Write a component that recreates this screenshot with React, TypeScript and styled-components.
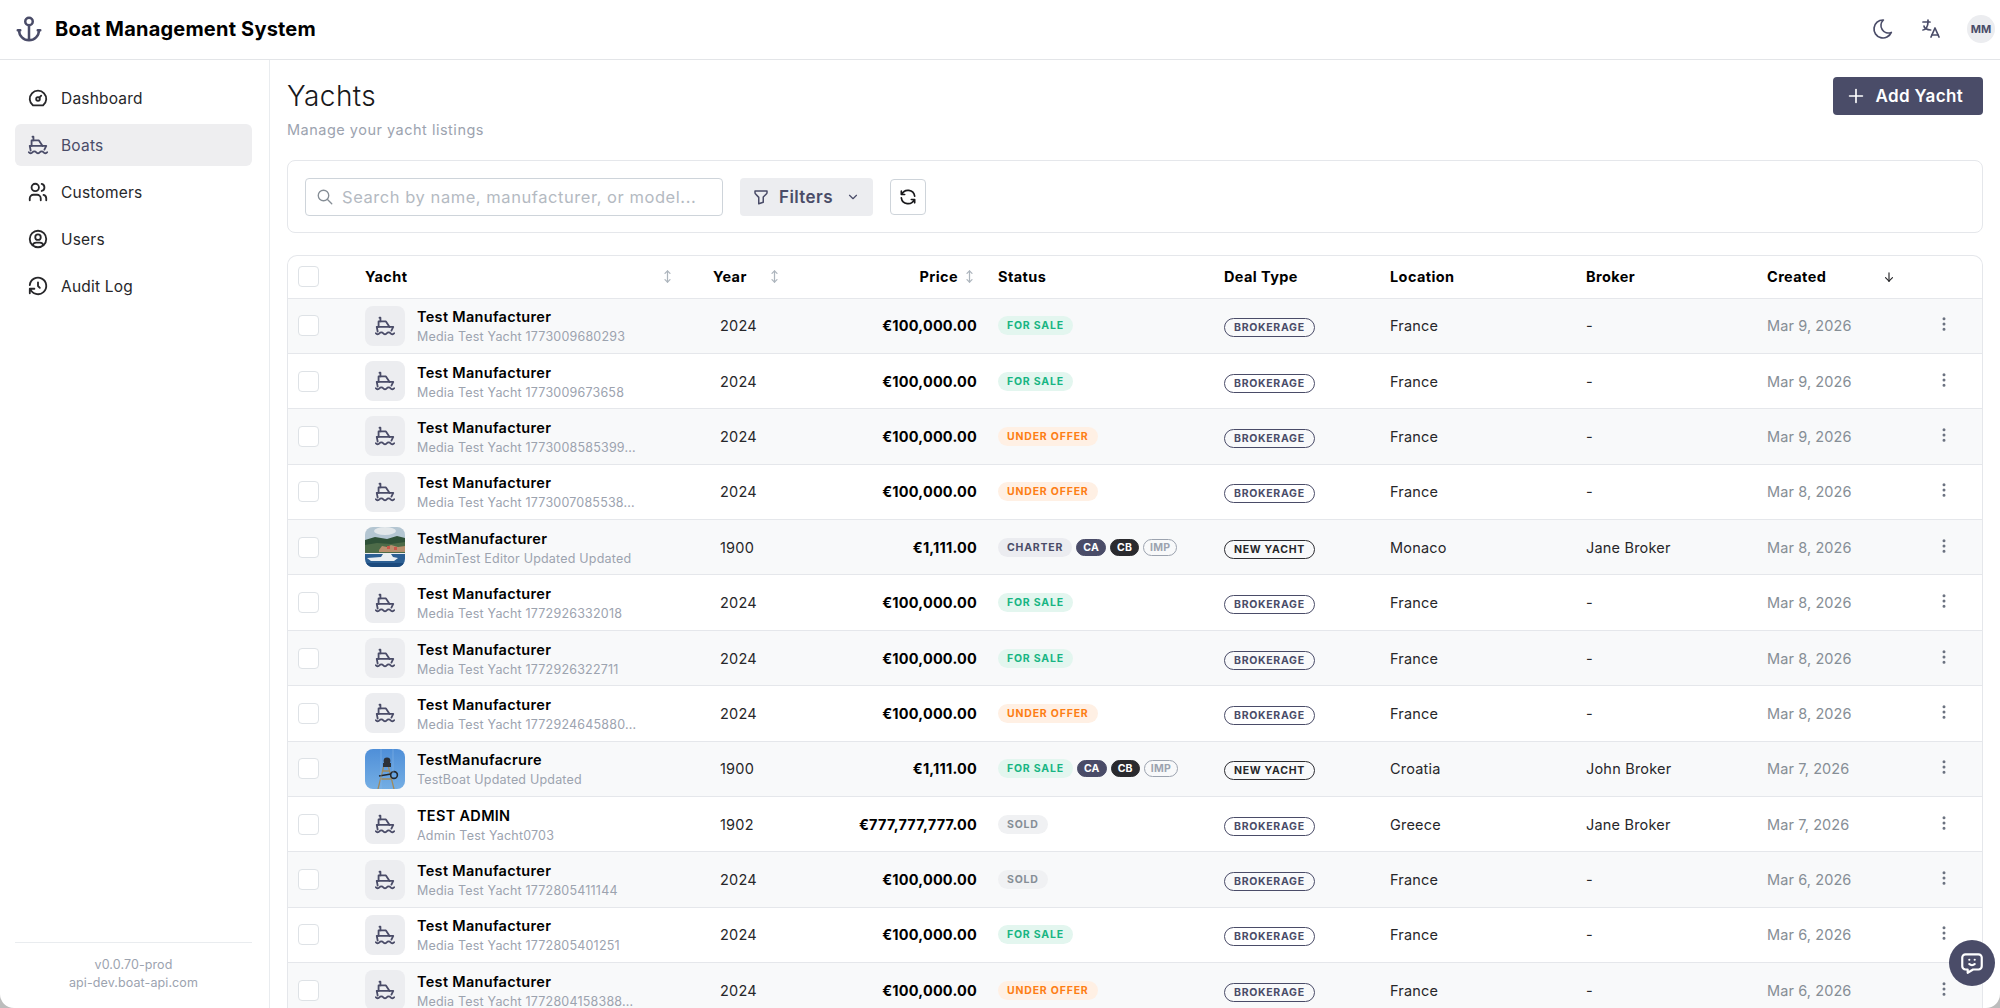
import React from 'react';
import styled, { createGlobalStyle } from 'styled-components';
import {
  TbAnchor,
  TbArrowDown,
  TbArrowsVertical,
  TbChevronDown,
  TbDashboard,
  TbDotsVertical,
  TbFilter,
  TbHistory,
  TbLanguage,
  TbMessageChatbot,
  TbMoon,
  TbPlus,
  TbRefresh,
  TbSearch,
  TbShip,
  TbUserCircle,
  TbUsers,
} from 'react-icons/tb';

const GlobalStyle = createGlobalStyle`
  html, body {
    margin: 0;
    height: 100%;
    background: #bdbdbd;
    overflow: hidden;
  }
  #root {
    height: 100%;
  }
  * {
    box-sizing: border-box;
  }
`;

const Shell = styled.div`
  position: relative;
  display: flex;
  flex-direction: column;
  height: 1008px;
  background: #fff;
  border-radius: 0 0 14px 14px;
  overflow: hidden;
  font-family: Inter, 'Noto Sans', sans-serif;
  color: #000;
`;

const Header = styled.header`
  display: flex;
  align-items: center;
  justify-content: space-between;
  height: 60px;
  flex: none;
  padding: 0 5px 2px 14px;
  border-bottom: 1px solid #e3e5e8;
`;

const Brand = styled.div`
  display: flex;
  align-items: center;
  gap: 11px;
  font-size: 20px;
  font-weight: 700;
  letter-spacing: 0.2px;
  svg {
    color: #4a4c68;
  }
`;

const HeaderTools = styled.div`
  display: flex;
  align-items: center;
  gap: 24px;
  color: #4a4c68;
`;

const Avatar = styled.div`
  display: flex;
  align-items: center;
  justify-content: center;
  width: 28px;
  height: 28px;
  border-radius: 50%;
  background: #ecedf0;
  font-size: 11px;
  font-weight: 700;
  color: #4a4c68;
`;

const Body = styled.div`
  display: flex;
  flex: 1;
  min-height: 0;
`;

const Sidebar = styled.nav`
  display: flex;
  flex-direction: column;
  width: 270px;
  flex: none;
  padding: 17px 17px 0 15px;
  border-right: 1px solid #e9ecef;
`;

const NavList = styled.div`
  display: flex;
  flex-direction: column;
  gap: 5px;
  flex: 1;
`;

const NavItem = styled.div<{ $active?: boolean }>`
  display: flex;
  align-items: center;
  gap: 12px;
  height: 42px;
  padding: 0 12px;
  border-radius: 6px;
  font-size: 15.5px;
  letter-spacing: 0.2px;
  background: ${(p) => (p.$active ? '#eeeef0' : 'transparent')};
  color: ${(p) => (p.$active ? '#4a4c68' : '#27272a')};
`;

const SidebarFooter = styled.div`
  margin-top: auto;
  height: 66px;
  padding-top: 13px;
  border-top: 1px solid #e9ecef;
  text-align: center;
  font-size: 12.5px;
  line-height: 18px;
  letter-spacing: 0.1px;
  color: #9ca3af;
`;

const Main = styled.main`
  flex: 1;
  min-width: 0;
  padding: 17px 17px 0 17px;
`;

const PageHead = styled.div`
  display: flex;
  justify-content: space-between;
  align-items: flex-start;
  height: 83px;
`;

const Title = styled.h1`
  margin: 0;
  font-size: 28px;
  line-height: 38px;
  font-weight: 300;
  letter-spacing: 0.4px;
  color: #18181b;
`;

const Subtitle = styled.div`
  margin-top: 6px;
  font-size: 14.5px;
  letter-spacing: 0.5px;
  color: #9ca3af;
`;

const PrimaryButton = styled.button`
  display: flex;
  align-items: center;
  gap: 9px;
  height: 38px;
  padding: 0 20px 0 12px;
  border: 0;
  border-radius: 4px;
  background: #4a4c68;
  color: #fff;
  font: 600 17px Inter, sans-serif;
  letter-spacing: 0.35px;
`;

const FilterCard = styled.div`
  display: flex;
  align-items: center;
  gap: 17px;
  height: 73px;
  padding: 0 17px;
  border: 1px solid #e5e7eb;
  border-radius: 8px;
`;

const SearchBox = styled.div`
  display: flex;
  align-items: center;
  gap: 8px;
  width: 418px;
  height: 38px;
  padding: 0 10px;
  border: 1px solid #ced4da;
  border-radius: 4px;
  color: #868e96;
  white-space: nowrap;
`;

const Placeholder = styled.span`
  color: #b4bac2;
  font-size: 16.5px;
  letter-spacing: 0.55px;
`;

const FilterButton = styled.button`
  display: flex;
  align-items: center;
  gap: 9px;
  width: 133px;
  height: 38px;
  padding: 0 13px 0 12px;
  border: 0;
  border-radius: 4px;
  background: #ecedf0;
  color: #4a4c68;
  font: 600 17px Inter, sans-serif;
  letter-spacing: 0.4px;
  svg:last-child {
    margin-left: auto;
  }
`;

const IconButton = styled.button`
  display: flex;
  align-items: center;
  justify-content: center;
  width: 36px;
  height: 36px;
  padding: 0;
  background: #fff;
  border: 1px solid #ced4da;
  border-radius: 4px;
  color: #18181b;
`;

const TableCard = styled.div`
  margin-top: 22px;
  border: 1px solid #e5e7eb;
  border-bottom: 0;
  border-radius: 10px 10px 0 0;
  overflow: hidden;
`;

const Table = styled.table`
  width: 100%;
  table-layout: fixed;
  border-collapse: collapse;
`;

const HeadCell = styled.th`
  height: 42px;
  padding: 0 8px;
  text-align: left;
  font-size: 14.5px;
  font-weight: 700;
  letter-spacing: 0.4px;
  border-bottom: 1px solid #e5e7eb;
`;

const CheckHead = styled(HeadCell)`
  padding-left: 10px;
`;

const HeadInner = styled.div<{ $gap?: number; $right?: boolean; $spread?: boolean }>`
  display: flex;
  align-items: center;
  justify-content: ${(p) => (p.$spread ? 'space-between' : p.$right ? 'flex-end' : 'flex-start')};
  gap: ${(p) => p.$gap ?? 0}px;
  padding-right: ${(p) => (p.$spread ? 22 : p.$right ? 5 : 0)}px;
  svg {
    flex: none;
    color: #adb5bd;
  }
`;

const SortedIcon = styled(TbArrowDown)`
  && {
    color: #27272a;
  }
`;

const Row = styled.tr`
  &:nth-child(odd) {
    background: #f8f9fa;
  }
`;

const Cell = styled.td`
  height: 55.4px;
  padding: 0 8px;
  font-size: 14.5px;
  letter-spacing: 0.2px;
  color: #27272a;
  border-bottom: 1px solid #e5e7eb;
  white-space: nowrap;
`;

const YearCell = styled(Cell)`
  padding-left: 15px;
`;

const PriceCell = styled(Cell)`
  padding-right: 13px;
  text-align: right;
  font-weight: 700;
  color: #000;
`;

const DateCell = styled(Cell)`
  letter-spacing: 0.1px;
  color: #868e96;
`;

const ActionCell = styled(Cell)`
  padding: 0 0 0 19px;
  color: #6b7280;
`;

const CheckCell = styled(Cell)`
  padding-left: 10px;
`;

const Checkbox = styled.div`
  width: 21px;
  height: 21px;
  background: #fff;
  border: 1px solid #dee2e6;
  border-radius: 4px;
`;

const YachtInfo = styled.div`
  display: flex;
  align-items: center;
  gap: 12px;
`;

const YachtText = styled.div`
  padding-top: 2px;
`;

const Thumb = styled.div`
  display: flex;
  align-items: center;
  justify-content: center;
  flex: none;
  width: 40px;
  height: 40px;
  border-radius: 8px;
  overflow: hidden;
  background: #ecedf0;
  color: #4a4c68;
`;

const YachtName = styled.div`
  font-size: 14.5px;
  line-height: 20px;
  font-weight: 600;
  letter-spacing: 0.3px;
  color: #000;
`;

const YachtModel = styled.div`
  font-size: 12.5px;
  line-height: 19px;
  color: #9ca3af;
`;

const BadgeRow = styled.div`
  display: flex;
  align-items: center;
  gap: 4px;
`;

const statusColors: Record<string, { bg: string; fg: string }> = {
  'FOR SALE': { bg: '#e3f6ef', fg: '#17b583' },
  'UNDER OFFER': { bg: '#fff0e4', fg: '#fd7e14' },
  CHARTER: { bg: '#ebecf0', fg: '#4a4c68' },
  SOLD: { bg: '#f0f1f3', fg: '#868e96' },
};

const StatusBadge = styled.span<{ $bg: string; $fg: string }>`
  display: inline-flex;
  align-items: center;
  height: 19px;
  padding: 0 9px;
  border-radius: 10px;
  font-size: 10.5px;
  font-weight: 700;
  letter-spacing: 0.8px;
  background: ${(p) => p.$bg};
  color: ${(p) => p.$fg};
`;

const MiniBadge = styled.span<{ $bg: string; $fg: string; $line?: string }>`
  display: inline-flex;
  align-items: center;
  height: 17px;
  padding: 0 6px;
  border-radius: 9px;
  font-size: 10.5px;
  font-weight: 700;
  letter-spacing: 0.2px;
  background: ${(p) => p.$bg};
  color: ${(p) => p.$fg};
  border: 1px solid ${(p) => p.$line ?? p.$bg};
`;

const DealBadge = styled.span<{ $dark?: boolean }>`
  display: inline-flex;
  align-items: center;
  height: 19px;
  margin-top: 4px;
  padding: 0 9px;
  border-radius: 10px;
  font-size: 10.5px;
  font-weight: 700;
  letter-spacing: 0.7px;
  background: transparent;
  color: ${(p) => (p.$dark ? '#27272a' : '#4a4c68')};
  border: 1.5px solid ${(p) => (p.$dark ? '#2e2e33' : '#4a4c68')};
`;

const ChatBubble = styled.div`
  position: absolute;
  right: 5px;
  bottom: 22px;
  display: flex;
  align-items: center;
  justify-content: center;
  width: 46px;
  height: 46px;
  border-radius: 50%;
  background: #4a4c68;
  color: #fff;
`;

const CoastPhoto = () => (
  <svg width="40" height="40" viewBox="0 0 40 40">
    <rect width="40" height="14" fill="#b4c6d2" />
    <ellipse cx="20" cy="4" rx="11" ry="4" fill="#e2e7ea" />
    <path d="M0 13l10-3 12 2 10-3 8 2v14H0z" fill="#2f5138" />
    <path d="M0 18l12-2 14 1 14-2v11H0z" fill="#4d6b48" />
    <path d="M14 23l3-4 5 1 4-2 7 2 7-1v6H14z" fill="#b98f6e" />
    <path d="M22 19h3v3h-3zM29 20h3v3h-3z" fill="#c8574a" />
    <rect y="27" width="40" height="13" fill="#2c5f93" />
    <path d="M2 31l14-1 2-3h8l2 3 5 1-4 3H6z" fill="#e9eef2" />
    <rect y="36" width="40" height="4" fill="#1c4a7d" />
  </svg>
);

const StatuePhoto = () => (
  <svg width="40" height="40" viewBox="0 0 40 40">
    <defs>
      <linearGradient id="sky" x1="0" y1="0" x2="0" y2="1">
        <stop offset="0" stopColor="#4f8fd8" />
        <stop offset="1" stopColor="#74aee4" />
      </linearGradient>
    </defs>
    <rect width="40" height="40" fill="url(#sky)" />
    <path d="M20 12L13 40M22 12l7 28M15 30h12M17 22h8" stroke="#a08a5c" strokeWidth="1.3" fill="none" />
    <circle cx="22" cy="12" r="3.4" fill="#2c3138" />
    <path d="M18 14h8v4h-8z" fill="#2c3138" />
    <circle cx="29" cy="26" r="3.4" fill="none" stroke="#23282e" strokeWidth="1.6" />
    <path d="M14 27l12-2" stroke="#23282e" strokeWidth="1.4" />
    <path d="M16 0v40M28 0v24" stroke="#8fbbe6" strokeWidth="0.5" />
  </svg>
);

const sortIcon = <TbArrowsVertical size={15} />;

type Yacht = {
  name: string;
  model: string;
  year: string;
  price: string;
  status: string;
  tags?: boolean;
  deal: string;
  location: string;
  broker: string;
  created: string;
  photo?: React.ReactNode;
};

const test = (model: string, status: string, created: string): Yacht => ({
  name: 'Test Manufacturer',
  model,
  year: '2024',
  price: '€100,000.00',
  status,
  deal: 'BROKERAGE',
  location: 'France',
  broker: '-',
  created,
});

const yachts: Yacht[] = [
  test('Media Test Yacht 1773009680293', 'FOR SALE', 'Mar 9, 2026'),
  test('Media Test Yacht 1773009673658', 'FOR SALE', 'Mar 9, 2026'),
  test('Media Test Yacht 1773008585399...', 'UNDER OFFER', 'Mar 9, 2026'),
  test('Media Test Yacht 1773007085538...', 'UNDER OFFER', 'Mar 8, 2026'),
  {
    name: 'TestManufacturer',
    model: 'AdminTest Editor Updated Updated',
    year: '1900',
    price: '€1,111.00',
    status: 'CHARTER',
    tags: true,
    deal: 'NEW YACHT',
    location: 'Monaco',
    broker: 'Jane Broker',
    created: 'Mar 8, 2026',
    photo: <CoastPhoto />,
  },
  test('Media Test Yacht 1772926332018', 'FOR SALE', 'Mar 8, 2026'),
  test('Media Test Yacht 1772926322711', 'FOR SALE', 'Mar 8, 2026'),
  test('Media Test Yacht 1772924645880...', 'UNDER OFFER', 'Mar 8, 2026'),
  {
    name: 'TestManufacrure',
    model: 'TestBoat Updated Updated',
    year: '1900',
    price: '€1,111.00',
    status: 'FOR SALE',
    tags: true,
    deal: 'NEW YACHT',
    location: 'Croatia',
    broker: 'John Broker',
    created: 'Mar 7, 2026',
    photo: <StatuePhoto />,
  },
  {
    name: 'TEST ADMIN',
    model: 'Admin Test Yacht0703',
    year: '1902',
    price: '€777,777,777.00',
    status: 'SOLD',
    deal: 'BROKERAGE',
    location: 'Greece',
    broker: 'Jane Broker',
    created: 'Mar 7, 2026',
  },
  test('Media Test Yacht 1772805411144', 'SOLD', 'Mar 6, 2026'),
  test('Media Test Yacht 1772805401251', 'FOR SALE', 'Mar 6, 2026'),
  test('Media Test Yacht 1772804158388...', 'UNDER OFFER', 'Mar 6, 2026'),
];

const navItems = [
  { label: 'Dashboard', icon: <TbDashboard size={22} /> },
  { label: 'Boats', icon: <TbShip size={22} />, active: true },
  { label: 'Customers', icon: <TbUsers size={22} /> },
  { label: 'Users', icon: <TbUserCircle size={22} /> },
  { label: 'Audit Log', icon: <TbHistory size={22} /> },
];

const columnWidths = [69, 348, 95, 190, 226, 166, 196, 181, 157, 67];

const App: React.FC = () => (
  <Shell>
    <GlobalStyle />
    <Header>
      <Brand>
        <TbAnchor size={30} />
        Boat Management System
      </Brand>
      <HeaderTools>
        <TbMoon size={24} strokeWidth={1.7} />
        <TbLanguage size={24} strokeWidth={1.7} />
        <Avatar>MM</Avatar>
      </HeaderTools>
    </Header>
    <Body>
      <Sidebar>
        <NavList>
          {navItems.map((item) => (
            <NavItem key={item.label} $active={item.active}>
              {item.icon}
              {item.label}
            </NavItem>
          ))}
        </NavList>
        <SidebarFooter>
          v0.0.70-prod
          <br />
          api-dev.boat-api.com
        </SidebarFooter>
      </Sidebar>
      <Main>
        <PageHead>
          <div>
            <Title>Yachts</Title>
            <Subtitle>Manage your yacht listings</Subtitle>
          </div>
          <PrimaryButton>
            <TbPlus size={22} strokeWidth={1.8} />
            Add Yacht
          </PrimaryButton>
        </PageHead>
        <FilterCard>
          <SearchBox>
            <TbSearch size={18} strokeWidth={1.8} />
            <Placeholder>Search by name, manufacturer, or model...</Placeholder>
          </SearchBox>
          <FilterButton>
            <TbFilter size={18} />
            Filters
            <TbChevronDown size={14} />
          </FilterButton>
          <IconButton>
            <TbRefresh size={20} />
          </IconButton>
        </FilterCard>
        <TableCard>
          <Table>
            <colgroup>
              {columnWidths.map((w, i) => (
                <col key={i} width={w} />
              ))}
            </colgroup>
            <thead>
              <tr>
                <CheckHead>
                  <Checkbox />
                </CheckHead>
                <HeadCell>
                  <HeadInner $spread>
                    Yacht
                    {sortIcon}
                  </HeadInner>
                </HeadCell>
                <HeadCell>
                  <HeadInner $gap={20}>
                    Year
                    {sortIcon}
                  </HeadInner>
                </HeadCell>
                <HeadCell>
                  <HeadInner $right $gap={4}>
                    Price
                    {sortIcon}
                  </HeadInner>
                </HeadCell>
                <HeadCell>Status</HeadCell>
                <HeadCell>Deal Type</HeadCell>
                <HeadCell>Location</HeadCell>
                <HeadCell>Broker</HeadCell>
                <HeadCell>
                  <HeadInner $gap={56}>
                    Created
                    <SortedIcon size={14} />
                  </HeadInner>
                </HeadCell>
                <HeadCell />
              </tr>
            </thead>
            <tbody>
              {yachts.map((y) => {
                const colors = statusColors[y.status];
                return (
                  <Row key={y.model}>
                    <CheckCell>
                      <Checkbox />
                    </CheckCell>
                    <Cell>
                      <YachtInfo>
                        <Thumb>{y.photo ?? <TbShip size={22} />}</Thumb>
                        <YachtText>
                          <YachtName>{y.name}</YachtName>
                          <YachtModel>{y.model}</YachtModel>
                        </YachtText>
                      </YachtInfo>
                    </Cell>
                    <YearCell>{y.year}</YearCell>
                    <PriceCell>{y.price}</PriceCell>
                    <Cell>
                      <BadgeRow>
                        <StatusBadge $bg={colors.bg} $fg={colors.fg}>
                          {y.status}
                        </StatusBadge>
                        {y.tags && (
                          <>
                            <MiniBadge $bg="#4a4c68" $fg="#fff">CA</MiniBadge>
                            <MiniBadge $bg="#2a2a2e" $fg="#fff">CB</MiniBadge>
                            <MiniBadge $bg="transparent" $fg="#9ca3af" $line="#9ca3af">IMP</MiniBadge>
                          </>
                        )}
                      </BadgeRow>
                    </Cell>
                    <Cell>
                      <DealBadge $dark={y.deal === 'NEW YACHT'}>{y.deal}</DealBadge>
                    </Cell>
                    <Cell>{y.location}</Cell>
                    <Cell>{y.broker}</Cell>
                    <DateCell>{y.created}</DateCell>
                    <ActionCell>
                      <TbDotsVertical size={18} />
                    </ActionCell>
                  </Row>
                );
              })}
            </tbody>
          </Table>
        </TableCard>
      </Main>
    </Body>
    <ChatBubble>
      <TbMessageChatbot size={26} />
    </ChatBubble>
  </Shell>
);

export default App;
